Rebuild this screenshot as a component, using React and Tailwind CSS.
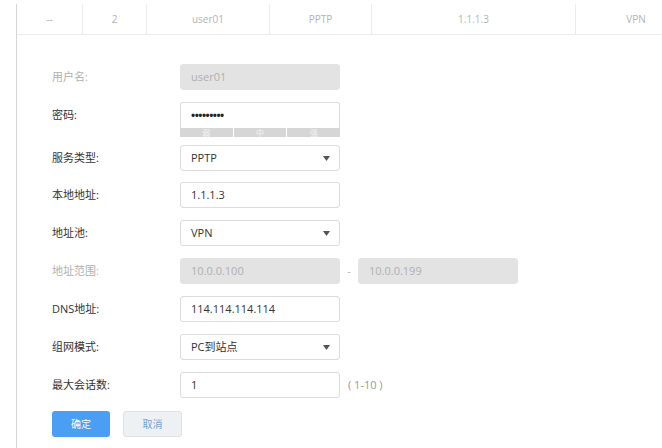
import React from 'react';

const font = { fontFamily: '"Open Sans", "Noto Sans CJK SC", sans-serif' };

// columns of the summary row above the form
const cols = [
  { w: 'w-[66px]', text: '--' },
  { w: 'w-[64px]', text: '2' },
  { w: 'w-[123px]', text: 'user01' },
  { w: 'w-[102px]', text: 'PPTP' },
  { w: 'w-[204px]', text: '1.1.1.3' },
  { w: 'w-[120px]', text: 'VPN' },
];

const Arrow = () => (
  <svg width="7" height="5" viewBox="0 0 7 5" className="absolute right-[9px] top-[10px]">
    <path d="M0 0 L7 0 L3.5 5 Z" fill="#555" />
  </svg>
);

const Label = ({ children, disabled }) => (
  <div className={`w-[128px] text-[11px] ${disabled ? 'text-[#b0b0b0]' : 'text-[#333]'}`}>{children}</div>
);

const Input = ({ value, disabled, select }) => (
  <div
    className={`relative w-[160px] h-[26px] rounded-[3px] flex items-center px-[10px] text-[11px] ${
      disabled ? 'bg-[#e3e3e3] border border-[#e3e3e3] text-[#b0b0b0]' : 'bg-white border border-[#dcdcdc] text-[#333]'
    }`}
  >
    {value}
    {select && <Arrow />}
  </div>
);

const Row = ({ label, disabled, className = '', children }) => (
  <div className={`flex items-center ${className}`}>
    <Label disabled={disabled}>{label}</Label>
    {children}
  </div>
);

export default function App() {
  return (
    <div className="w-[662px] h-[448px] overflow-hidden bg-white pl-[16px] pt-[4px]" style={font}>
      <div className="h-full border-l border-[#d6d6d6]">
        {/* summary row */}
        <div className="flex h-[31px] border-b border-[#ececec] text-[10px] text-[#b3b3b3]">
          {cols.map((c, i) => (
            <div
              key={i}
              className={`${c.w} shrink-0 flex items-center justify-center ${i < cols.length - 1 ? 'border-r border-[#ececec]' : ''}`}
            >
              {c.text}
            </div>
          ))}
        </div>

        {/* form */}
        <div className="pl-[35px] pt-[29px] flex flex-col">
          <Row label="用户名:" disabled>
            <Input value="user01" disabled />
          </Row>

          <div className="flex mt-[12px]">
            <div className="w-[128px] h-[26px] flex items-center text-[11px] text-[#333]">密码:</div>
            <div className="w-[160px]">
              <div className="h-[26px] rounded-t-[3px] border border-[#dcdcdc] border-b-0 bg-white flex items-center px-[10px] text-[11px] font-bold text-[#222] tracking-[-0.5px]">
                •••••••••
              </div>
              <div className="h-[9px] bg-[#d6d6d6] flex text-[8px] leading-[9px] text-[#f4f4f4]">
                <div className="flex-1 text-center border-r border-white">弱</div>
                <div className="flex-1 text-center border-r border-white">中</div>
                <div className="flex-1 text-center">强</div>
              </div>
            </div>
          </div>

          <Row label="服务类型:" className="mt-[8px]">
            <Input value="PPTP" select />
          </Row>
          <Row label="本地地址:" className="mt-[11px]">
            <Input value="1.1.1.3" />
          </Row>
          <Row label="地址池:" className="mt-[12px]">
            <Input value="VPN" select />
          </Row>
          <Row label="地址范围:" disabled className="mt-[12px]">
            <Input value="10.0.0.100" disabled />
            <span className="w-[18px] text-center text-[10px] text-[#aaa]">-</span>
            <Input value="10.0.0.199" disabled />
          </Row>
          <Row label="DNS地址:" className="mt-[12px]">
            <Input value="114.114.114.114" />
          </Row>
          <Row label="组网模式:" className="mt-[12px]">
            <Input value="PC到站点" select />
          </Row>
          <Row label="最大会话数:" className="mt-[12px]">
            <Input value="1" />
            <span className="ml-[8px] text-[11px] text-[#999]">( 1-10 )</span>
          </Row>

          <div className="flex gap-[13px] mt-[13px]">
            <button className="w-[58px] h-[26px] rounded-[3px] bg-[#4a9ff5] text-white text-[10px]">确定</button>
            <button className="w-[59px] h-[26px] rounded-[3px] bg-[#eef1f4] border border-[#dde1e5] text-[#6ea3d8] text-[10px]">
              取消
            </button>
          </div>
        </div>
      </div>
    </div>
  );
}
